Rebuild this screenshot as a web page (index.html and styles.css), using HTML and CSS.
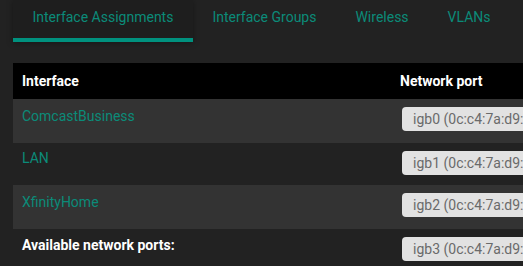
FILE: index.html
```html
<!DOCTYPE html>
<html lang="en">
<head>
    <meta charset="UTF-8">
    <title>Interfaces: Interface Assignments</title>
    <link rel="stylesheet" href="styles.css">
</head>
<body>

<div class="page">
    <ul class="tabs">
        <li class="tab active"><a href="#">Interface Assignments</a></li>
        <li class="tab"><a href="#">Interface Groups</a></li>
        <li class="tab"><a href="#">Wireless</a></li>
        <li class="tab"><a href="#">VLANs</a></li>
    </ul>

    <table class="assign">
        <thead>
            <tr>
                <th class="col-if">Interface</th>
                <th>Network port</th>
            </tr>
        </thead>
        <tbody>
            <tr class="odd">
                <td><a href="#">ComcastBusiness</a></td>
                <td><div class="port">igb0 (0c:c4:7a:d9:6a:10)</div></td>
            </tr>
            <tr class="even">
                <td><a href="#">LAN</a></td>
                <td><div class="port">igb1 (0c:c4:7a:d9:6a:11)</div></td>
            </tr>
            <tr class="odd">
                <td><a href="#">XfinityHome</a></td>
                <td><div class="port">igb2 (0c:c4:7a:d9:6a:12)</div></td>
            </tr>
            <tr>
                <th class="avail">Available network ports:</th>
                <td><div class="port">igb3 (0c:c4:7a:d9:6a:13)</div></td>
            </tr>
        </tbody>
    </table>
</div>

</body>
</html>
```

FILE: styles.css
```css
body {
    margin: 0;
    background-color: #222;
    font-family: Roboto, "Liberation Sans", sans-serif;
    font-size: 14px;
    overflow: hidden;
}
.page {
    width: 760px;
    padding: 0 0 0 13px;
}
.tabs {
    display: flex;
    list-style: none;
    margin: 0;
    padding: 0;
}
.tab a {
    display: block;
    padding: 7px 19.5px 0;
    height: 31px;
    line-height: 20px;
    color: #0b8b79;
    text-decoration: none;
    border-bottom: 4px solid transparent;
}
.tab.active a {
    background: #1e1e1e;
    border-bottom-color: #00917e;
    box-shadow: 0 1px 6px rgba(0, 0, 0, 0.35);
}
.assign {
    width: 100%;
    margin-top: 21px;
    border-collapse: collapse;
}
.assign thead th {
    background: #000;
    color: #fff;
    font-weight: bold;
    text-align: left;
    height: 36px;
    padding: 0 9px;
}
.col-if {
    width: 360px;
}
.assign td,
.assign .avail {
    vertical-align: top;
    padding: 7px 9px 0;
    height: 37px;
    text-align: left;
}
.assign tr.odd td {
    background: #333;
}
.assign tr.even td {
    padding-top: 5px;
}
.assign td a {
    display: block;
    line-height: 20px;
    color: #0b8b79;
    text-decoration: none;
}
.assign tr.even .port {
    margin-top: 3px;
}
.assign .avail {
    color: #fff;
    font-weight: bold;
    padding-top: 8px;
}
.port {
    height: 24px;
    line-height: 24px;
    margin: 1px 0 0 2px;
    padding: 0 11px;
    background: #e2e2e2;
    border-radius: 4px;
    color: #6a6a6a;
    font-size: 14px;
}
```
